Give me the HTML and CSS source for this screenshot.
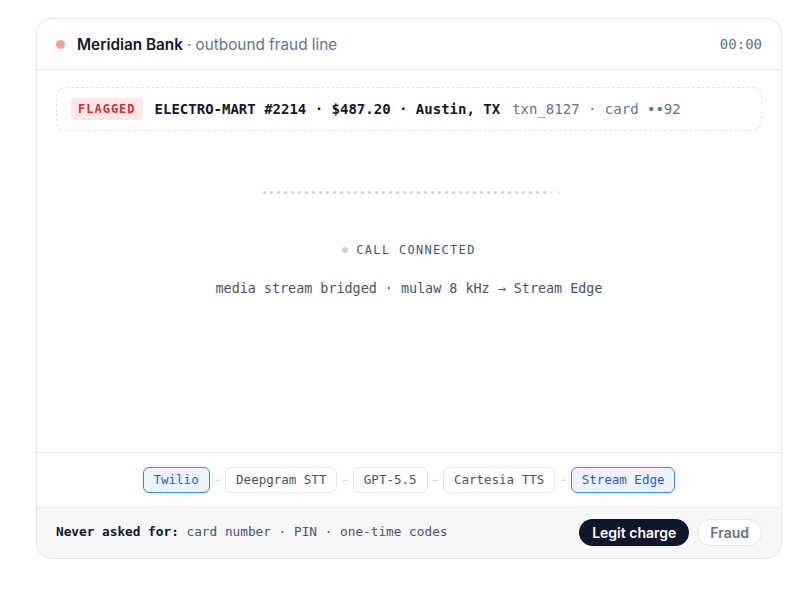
FILE: index.html
```html
<!DOCTYPE html>
<html lang="en">
<head>
    <meta charset="UTF-8">
    <meta name="viewport" content="width=device-width, initial-scale=1.0">
    <title>Meridian Bank - outbound fraud line</title>
    <link rel="stylesheet" href="styles.css">
</head>
<body>
    <div class="call-card">
        <div class="call-header">
            <span class="live-dot"></span>
            <span class="bank-name">Meridian Bank</span>
            <span class="line-name">· outbound fraud line</span>
            <span class="timer">00:00</span>
        </div>

        <div class="txn-wrap">
            <div class="txn">
                <span class="badge">FLAGGED</span>
                <span class="txn-main">ELECTRO-MART #2214 · $487.20 · Austin, TX</span>
                <span class="txn-meta">txn_8127 · card ••92</span>
            </div>
        </div>

        <div class="stage">
            <div class="wave" id="wave"></div>
            <div class="status"><span class="status-dot"></span>CALL CONNECTED</div>
            <div class="stream-info">media stream bridged · mulaw 8 kHz → Stream Edge</div>
        </div>

        <div class="pipeline">
            <span class="chip active">Twilio</span>
            <span class="arrow">→</span>
            <span class="chip">Deepgram STT</span>
            <span class="arrow">→</span>
            <span class="chip">GPT-5.5</span>
            <span class="arrow">→</span>
            <span class="chip">Cartesia TTS</span>
            <span class="arrow">→</span>
            <span class="chip active">Stream Edge</span>
        </div>

        <div class="call-footer">
            <p class="never"><strong>Never asked for:</strong> card number · PIN · one-time codes</p>
            <div class="actions">
                <button class="btn btn-dark">Legit charge</button>
                <button class="btn btn-light">Fraud</button>
            </div>
        </div>
    </div>

    <script>
        // idle waveform: flat dots, last ones fading out
        const wave = document.getElementById('wave');
        const count = 43;
        for (let i = 0; i < count; i++) {
            const dot = document.createElement('span');
            dot.className = 'bar';
            if (i >= count - 2) dot.classList.add('faded');
            wave.appendChild(dot);
        }
    </script>
</body>
</html>
```

FILE: styles.css
```css
* {
    box-sizing: border-box;
}
body {
    margin: 0;
    padding: 18px 18px 0 36px;
    background: #fff;
    font-family: Inter, 'Noto Sans', sans-serif;
    color: #0f172a;
}
.call-card {
    width: 746px;
    border: 1px solid #e5e7eb;
    border-radius: 16px;
    overflow: hidden;
    background: #fff;
    box-shadow: 0 1px 3px rgba(15, 23, 42, 0.04);
}
.call-header {
    display: flex;
    align-items: center;
    height: 51px;
    padding: 0 19px;
    border-bottom: 1px solid #e5e7eb;
    font-size: 15.3px;
}
.live-dot {
    width: 9px;
    height: 9px;
    border-radius: 50%;
    background: #f2a39a;
    margin-right: 12px;
}
.bank-name {
    font-weight: 600;
    margin-right: 4px;
}
.line-name {
    color: #64748b;
}
.timer {
    margin-left: auto;
    font-family: 'DejaVu Sans Mono', monospace;
    font-size: 14px;
    color: #64748b;
}
.txn-wrap {
    padding: 17px 19px 0;
}
.txn {
    display: flex;
    align-items: center;
    height: 44px;
    padding: 0 14px;
    border: 1px dashed #e2e5ea;
    border-radius: 10px;
    font-family: 'DejaVu Sans Mono', monospace;
    font-size: 14px;
}
.badge {
    background: #fde8e8;
    color: #d32f2f;
    font-weight: bold;
    font-size: 12px;
    letter-spacing: 1px;
    padding: 4px 7px;
    border-radius: 4px;
    margin-right: 12px;
}
.txn-main {
    font-weight: bold;
    color: #0f172a;
    margin-right: 12px;
}
.txn-meta {
    color: #64748b;
}
.stage {
    height: 321px;
    padding-top: 57px;
    display: flex;
    flex-direction: column;
    align-items: center;
    font-family: 'DejaVu Sans Mono', monospace;
}
.wave {
    display: flex;
    align-items: center;
    gap: 4px;
    height: 8px;
    margin-left: 4px;
}
.bar {
    width: 3px;
    height: 3px;
    border-radius: 50%;
    background: #c9d0db;
}
.bar.faded {
    background: #eceef2;
}
.status {
    display: flex;
    align-items: center;
    margin-top: 46px;
    font-size: 12px;
    letter-spacing: 1.3px;
    color: #475569;
    line-height: 16px;
}
.status-dot {
    width: 6px;
    height: 6px;
    border-radius: 50%;
    background: #cbd5e1;
    margin-right: 8px;
}
.stream-info {
    margin-top: 22px;
    font-size: 13.4px;
    line-height: 18px;
    color: #475569;
}
.pipeline {
    display: flex;
    justify-content: center;
    align-items: center;
    gap: 5px;
    height: 55px;
    border-top: 1px solid #e5e7eb;
    font-family: 'DejaVu Sans Mono', monospace;
}
.chip {
    height: 26px;
    line-height: 24px;
    padding: 0 10px;
    border: 1px solid #e5e7eb;
    border-radius: 6px;
    font-size: 12.5px;
    color: #4b5563;
    background: #fff;
}
.chip.active {
    border-color: #3b82f6;
    background: #eef4ff;
    color: #1d5fd6;
}
.arrow {
    font-size: 9px;
    color: #d1d5db;
}
.call-footer {
    display: flex;
    align-items: center;
    justify-content: space-between;
    height: 51px;
    padding: 0 19px 1px;
    background: #f6f7f9;
    border-top: 1px solid #e5e7eb;
}
.never {
    margin: 0 0 2px;
    font-family: 'DejaVu Sans Mono', monospace;
    font-size: 12.75px;
    color: #475569;
}
.never strong {
    color: #0f172a;
}
.actions {
    display: flex;
    gap: 8px;
}
.btn {
    font-family: Inter, sans-serif;
    font-size: 14px;
    font-weight: 600;
    height: 27px;
    border-radius: 14px;
    cursor: pointer;
}
.btn-dark {
    background: #0f172a;
    color: #fff;
    border: none;
    padding: 0 13px;
}
.btn-light {
    background: #fff;
    color: #6b7280;
    border: 1px solid #e5e7eb;
    padding: 0 12px;
}
```
